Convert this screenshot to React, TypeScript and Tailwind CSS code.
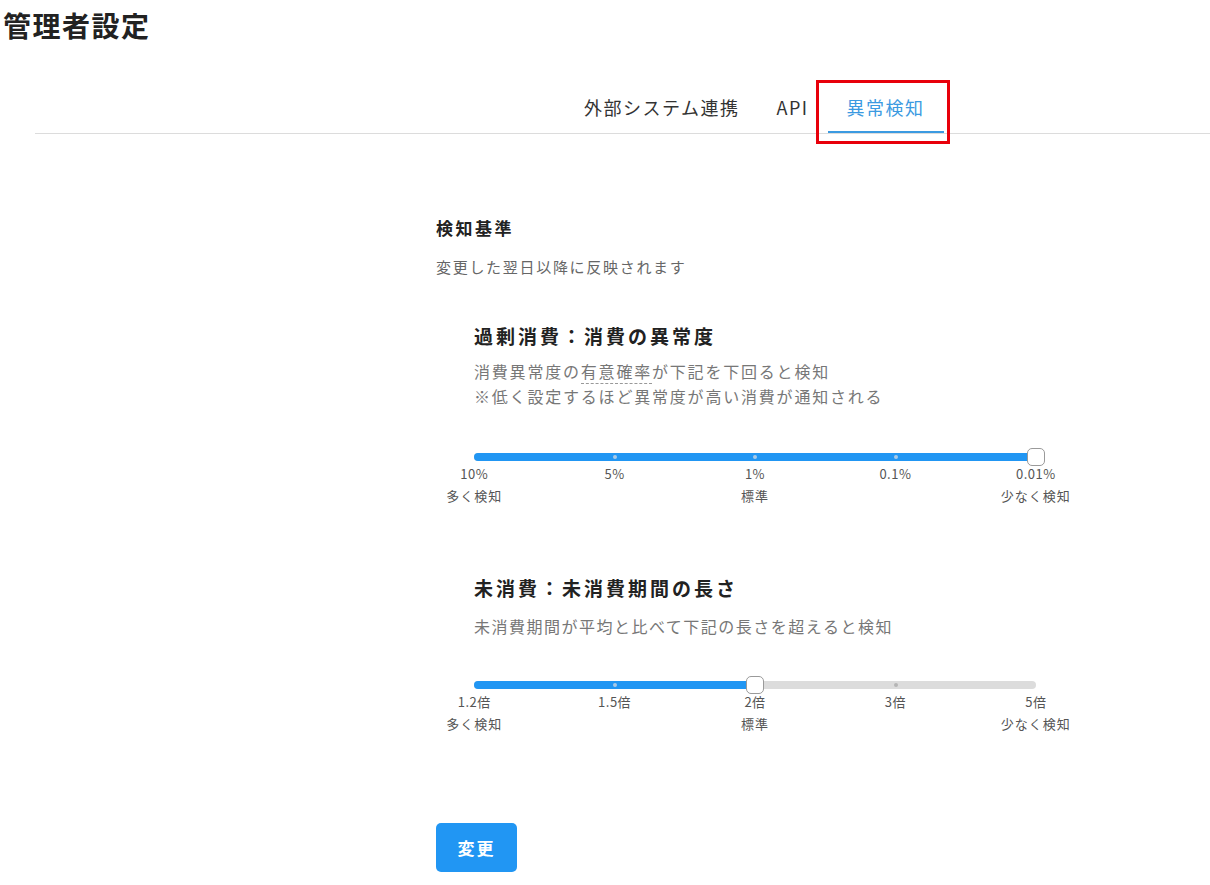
import React from "react";

const font = { fontFamily: '"Noto Sans CJK JP", "Noto Sans", sans-serif' };

interface SliderProps {
  ticks: string[];
  value: number; // index of selected tick
}

const Slider = ({ ticks, value }: SliderProps) => {
  const pct = (value / (ticks.length - 1)) * 100;
  return (
    <div>
      {/* track */}
      <div className="relative w-[562px] h-[18px] flex items-center">
        <div className="relative w-full h-[8px] rounded-full bg-[#dcdcdc]">
          <div
            className="absolute left-0 top-0 h-full rounded-full bg-[#2196f3]"
            style={{ width: `${pct}%` }}
          />
          {[25, 50, 75].map((p) => (
            <div
              key={p}
              className={`absolute top-[2px] w-[4px] h-[4px] rounded-full -ml-[2px] ${
                p <= pct ? "bg-[#a9c9e6]" : "bg-[#b5b5b5]"
              }`}
              style={{ left: `${p}%` }}
            />
          ))}
        </div>
        <div
          className="absolute top-0 w-[18px] h-[18px] -ml-[9px] rounded-[5px] bg-white border border-[#9a9a9a]"
          style={{ left: `${pct}%` }}
        />
      </div>
      {/* tick labels */}
      <div className="grid grid-cols-5 w-[702px] -ml-[70px] text-[13px] leading-[16px] tracking-[0.5px] text-[#555]">
        {ticks.map((t) => (
          <div key={t} className="text-center">
            {t}
          </div>
        ))}
      </div>
      <div className="grid grid-cols-5 w-[702px] -ml-[70px] mt-[5px] text-[13px] leading-[18px] text-[#555] tracking-[1px]">
        <div className="text-center">多く検知</div>
        <div />
        <div className="text-center">標準</div>
        <div />
        <div className="text-center">少なく検知</div>
      </div>
    </div>
  );
};

const App = () => {
  return (
    <div className="w-[1210px] h-[885px] bg-white text-[#333] overflow-hidden" style={font}>
      {/* Title */}
      <div className="h-[43px] pt-[7px] pl-[3px]">
        <h1 className="text-[28px] leading-[36px] font-bold tracking-[1.5px] text-[#222]">
          管理者設定
        </h1>
      </div>

      {/* Tabs */}
      <div className="mt-[37px] ml-[35px] border-b border-[#dcdcdc]">
        <div className="flex ml-[531px] gap-[2px] text-[18px] leading-[26px] tracking-[1.5px]">
          <div className="px-[18px] pt-[14px] pb-[11px] border-b-2 border-transparent text-[#333]">
            外部システム連携
          </div>
          <div className="px-[17px] pt-[14px] pb-[11px] border-b-2 border-transparent text-[#333]">
            API
          </div>
          <div className="relative px-[19px] pt-[14px] pb-[11px] border-b-2 border-[#3b9ae1] text-[#3b9ae1]">
            異常検知
            <div className="absolute -left-[12px] -right-[6px] top-0 -bottom-[13px] border-[3px] border-[#e8000b]" />
          </div>
        </div>
      </div>

      {/* Content */}
      <div className="ml-[436px]">
        <h2 className="mt-[82px] text-[17px] leading-[24px] font-bold tracking-[2.5px] text-[#222]">
          検知基準
        </h2>
        <p className="mt-[16px] text-[15px] leading-[22px] tracking-[1.7px] text-[#666]">
          変更した翌日以降に反映されます
        </p>

        <div className="ml-[38px]">
          <h3 className="mt-[45px] text-[19px] leading-[26px] font-bold tracking-[3px] text-[#222]">
            過剰消費：消費の異常度
          </h3>
          <p className="mt-[10px] text-[16px] leading-[25px] tracking-[1.8px] text-[#777]">
            消費異常度の
            <span className="border-b border-dashed border-[#999]">有意確率</span>
            が下記を下回ると検知
            <br />
            ※低く設定するほど異常度が高い消費が通知される
          </p>
          <div className="mt-[39px]">
            <Slider ticks={["10%", "5%", "1%", "0.1%", "0.01%"]} value={4} />
          </div>

          <h3 className="mt-[70px] text-[19px] leading-[26px] font-bold tracking-[3px] text-[#222]">
            未消費：未消費期間の長さ
          </h3>
          <p className="mt-[13px] text-[16px] leading-[25px] tracking-[1.5px] text-[#777]">
            未消費期間が平均と比べて下記の長さを超えると検知
          </p>
          <div className="mt-[37px]">
            <Slider ticks={["1.2倍", "1.5倍", "2倍", "3倍", "5倍"]} value={2} />
          </div>
        </div>

        <button className="mt-[90px] w-[81px] h-[49px] rounded-[5px] bg-[#2196f3] text-white text-[17px] font-bold tracking-[2px]">
          変更
        </button>
      </div>
    </div>
  );
};

export default App;
